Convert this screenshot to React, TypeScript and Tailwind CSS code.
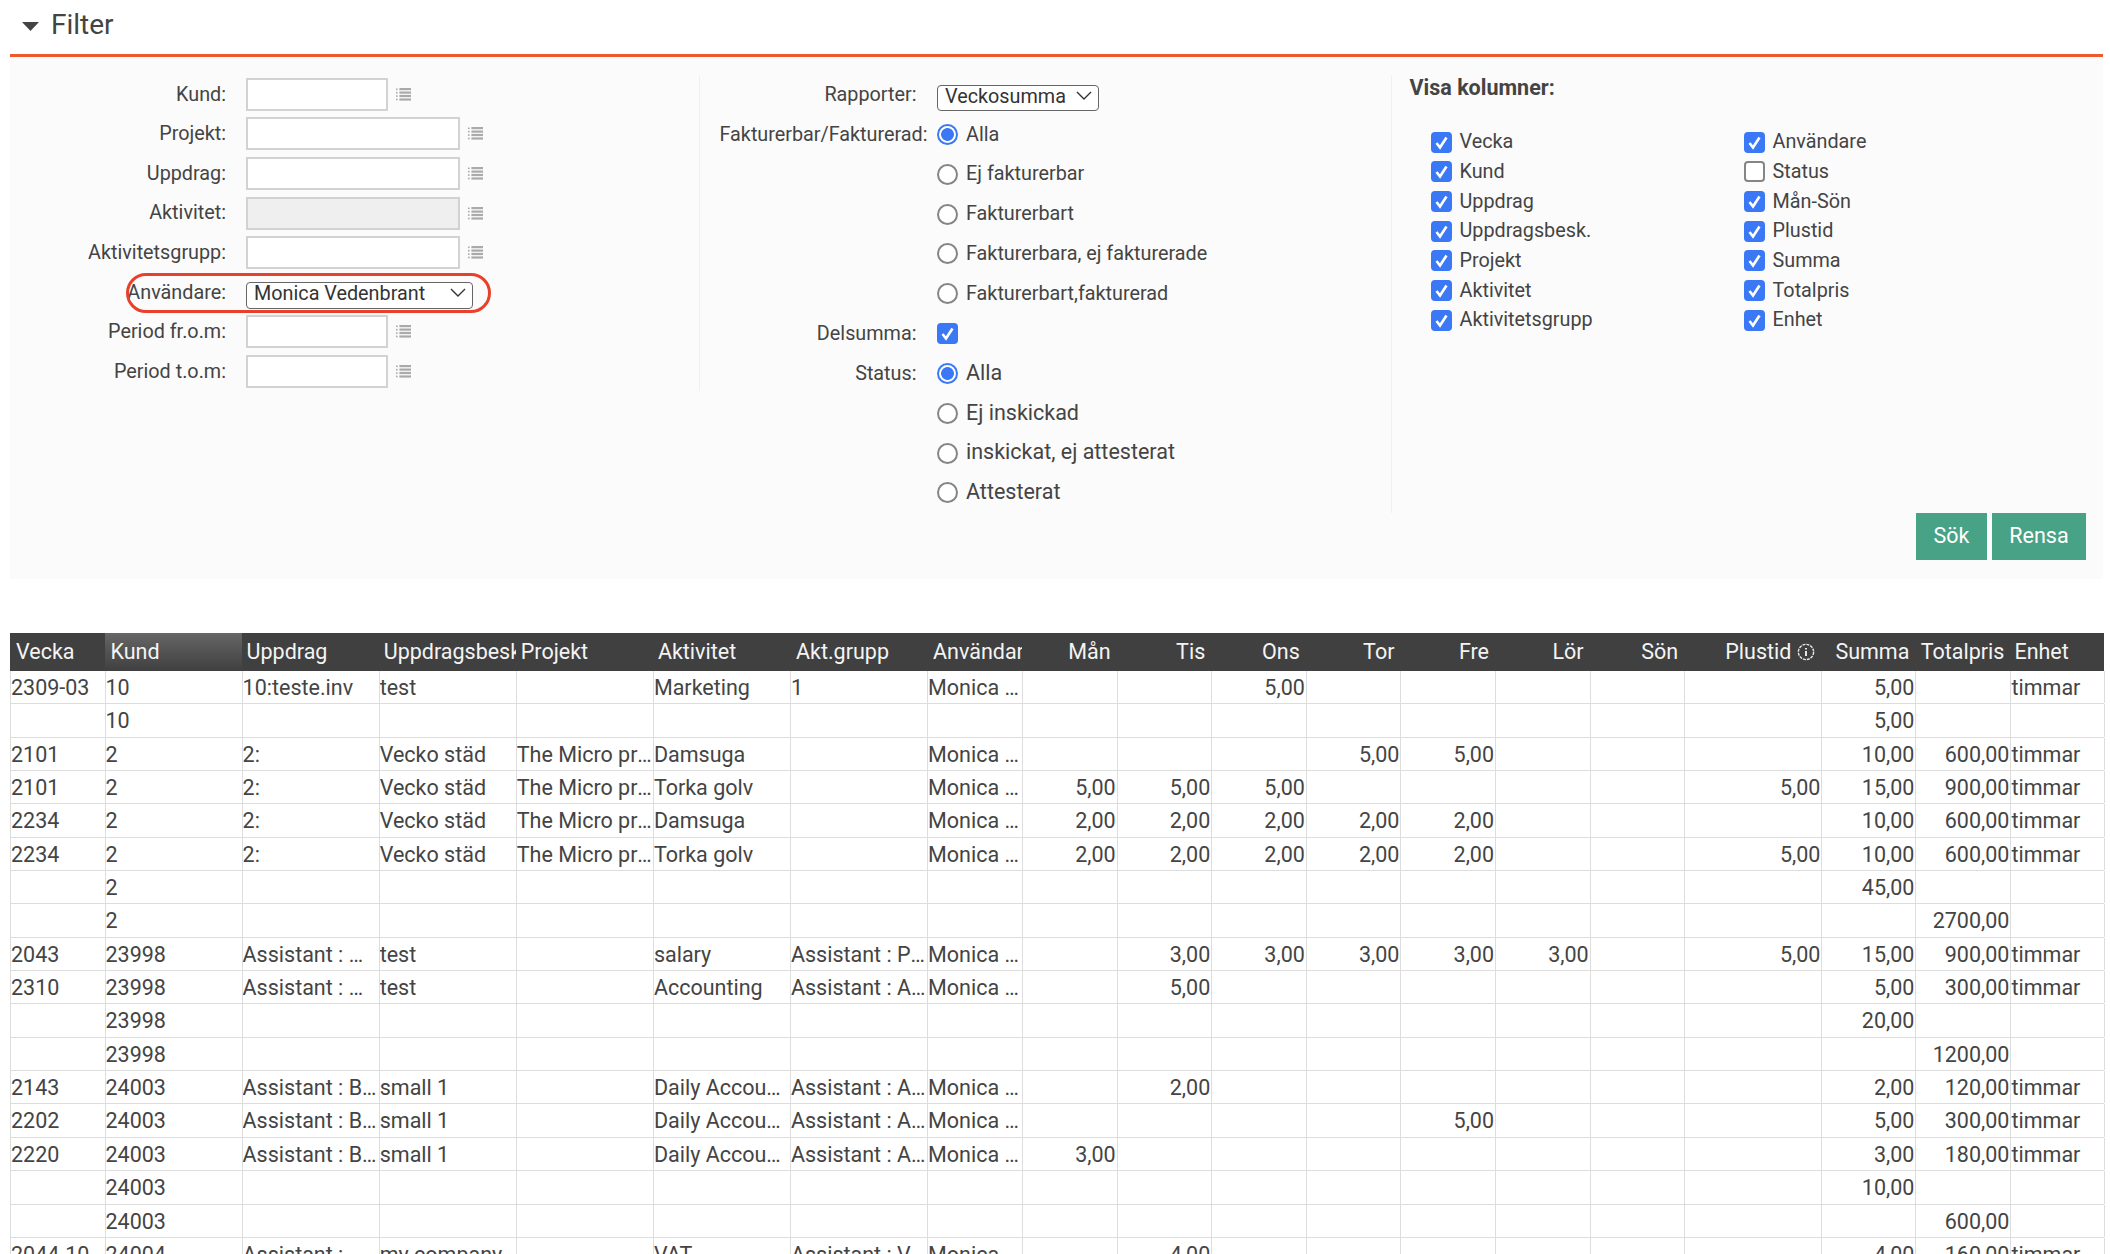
import { ReactNode } from 'react';

const ROW_GRID = 'grid grid-cols-[94.5px_137.1px_137.1px_137.1px_137.1px_137.1px_137.1px_95px_94.6px_94.6px_94.6px_94.6px_94.6px_94.6px_94.6px_137.2px_94px_95px_93.5px]';

type Row = {
  v?: string;
  k: string;
  u?: string;
  b?: string;
  p?: string;
  a?: string;
  g?: string;
  user?: boolean;
  days?: Partial<Record<0 | 1 | 2 | 3 | 4 | 5 | 6, string>>;
  plus?: string;
  sum?: string;
  total?: string;
  unit?: boolean;
};

const MICRO = 'The Micro project';
const USER = 'Monica Vedenbrant';

const rows: Row[] = [
  { v: '2309-03', k: '10', u: '10:teste.inv', b: 'test', a: 'Marketing', g: '1', user: true, days: { 2: '5,00' }, sum: '5,00', unit: true },
  { k: '10', sum: '5,00' },
  { v: '2101', k: '2', u: '2:', b: 'Vecko städ', p: MICRO, a: 'Damsuga', user: true, days: { 3: '5,00', 4: '5,00' }, sum: '10,00', total: '600,00', unit: true },
  { v: '2101', k: '2', u: '2:', b: 'Vecko städ', p: MICRO, a: 'Torka golv', user: true, days: { 0: '5,00', 1: '5,00', 2: '5,00' }, plus: '5,00', sum: '15,00', total: '900,00', unit: true },
  { v: '2234', k: '2', u: '2:', b: 'Vecko städ', p: MICRO, a: 'Damsuga', user: true, days: { 0: '2,00', 1: '2,00', 2: '2,00', 3: '2,00', 4: '2,00' }, sum: '10,00', total: '600,00', unit: true },
  { v: '2234', k: '2', u: '2:', b: 'Vecko städ', p: MICRO, a: 'Torka golv', user: true, days: { 0: '2,00', 1: '2,00', 2: '2,00', 3: '2,00', 4: '2,00' }, plus: '5,00', sum: '10,00', total: '600,00', unit: true },
  { k: '2', sum: '45,00' },
  { k: '2', total: '2700,00' },
  { v: '2043', k: '23998', u: 'Assistant : Marketing', b: 'test', a: 'salary', g: 'Assistant : Payroll', user: true, days: { 1: '3,00', 2: '3,00', 3: '3,00', 4: '3,00', 5: '3,00' }, plus: '5,00', sum: '15,00', total: '900,00', unit: true },
  { v: '2310', k: '23998', u: 'Assistant : Marketing', b: 'test', a: 'Accounting', g: 'Assistant : Accounting', user: true, days: { 1: '5,00' }, sum: '5,00', total: '300,00', unit: true },
  { k: '23998', sum: '20,00' },
  { k: '23998', total: '1200,00' },
  { v: '2143', k: '24003', u: 'Assistant : Bookkeeping', b: 'small 1', a: 'Daily Accounting', g: 'Assistant : Accounting', user: true, days: { 1: '2,00' }, sum: '2,00', total: '120,00', unit: true },
  { v: '2202', k: '24003', u: 'Assistant : Bookkeeping', b: 'small 1', a: 'Daily Accounting', g: 'Assistant : Accounting', user: true, days: { 4: '5,00' }, sum: '5,00', total: '300,00', unit: true },
  { v: '2220', k: '24003', u: 'Assistant : Bookkeeping', b: 'small 1', a: 'Daily Accounting', g: 'Assistant : Accounting', user: true, days: { 0: '3,00' }, sum: '3,00', total: '180,00', unit: true },
  { k: '24003', sum: '10,00' },
  { k: '24003', total: '600,00' },
  { v: '2044-10', k: '24004', u: 'Assistant : Marketing', b: 'my company', a: 'VAT', g: 'Assistant : VAT', user: true, days: { 1: '4,00' }, sum: '4,00', total: '160,00', unit: true },
];

function ListIcon() {
  return (
    <svg width="15" height="13" viewBox="0 0 15 13" className="shrink-0 text-[#aaaaaa]" fill="currentColor">
      <rect x="0" y="0.5" width="1.6" height="1.6" />
      <rect x="0" y="3.9" width="1.6" height="1.6" />
      <rect x="0" y="7.3" width="1.6" height="1.6" />
      <rect x="0" y="10.7" width="1.6" height="1.6" />
      <rect x="3.4" y="0" width="11.6" height="2.2" />
      <rect x="3.4" y="3.5" width="11.6" height="2.2" />
      <rect x="3.4" y="6.9" width="11.6" height="2.2" />
      <rect x="3.4" y="10.4" width="11.6" height="2.2" />
    </svg>
  );
}

function Select({ value, className }: { value: string; className: string }) {
  return (
    <span className={`relative inline-block ${className}`}>
      <select
        defaultValue={value}
        className="h-full w-full appearance-none rounded-[4px] border border-[#666666] bg-white pb-[3px] pl-[7px] leading-none text-[#333333]"
      >
        <option>{value}</option>
      </select>
      <svg width="16" height="9" viewBox="0 0 16 9" fill="none" stroke="#333333" strokeWidth="1.4" className="pointer-events-none absolute right-[7px] top-[9px]">
        <path d="M1 1l7 7 7-7" />
      </svg>
    </span>
  );
}

function FieldRow({ label, children }: { label: string; children: ReactNode }) {
  return (
    <div className="flex h-[39.6px] items-center">
      <label className="w-[236px] shrink-0 whitespace-nowrap pr-[20px] text-right">{label}</label>
      {children}
    </div>
  );
}

function Field({ label, wide, disabled }: { label: string; wide?: boolean; disabled?: boolean }) {
  return (
    <FieldRow label={label}>
      <input
        disabled={disabled}
        className={`h-[33px] border-2 border-[#d2d2d2] ${disabled ? 'bg-[#efefef]' : 'bg-white'} ${wide ? 'w-[214px]' : 'w-[142px]'}`}
      />
      <span className="ml-[8px]">
        <ListIcon />
      </span>
    </FieldRow>
  );
}

function MidRow({ label, wideLabel, children }: { label?: string; wideLabel?: boolean; children: ReactNode }) {
  return (
    <div className="flex h-[39.85px] items-center">
      <span className={`w-[237px] shrink-0 whitespace-nowrap text-right ${wideLabel ? 'pr-[9.5px]' : 'pr-[20.5px]'}`}>{label}</span>
      {children}
    </div>
  );
}

function Radio({ name, label, checked, rowLabel, wideLabel, large }: { name: string; label: string; checked?: boolean; rowLabel?: string; wideLabel?: boolean; large?: boolean }) {
  return (
    <MidRow label={rowLabel} wideLabel={wideLabel}>
      <label className="flex items-center">
        <input
          type="radio"
          name={name}
          defaultChecked={checked}
          className="m-0 h-[21px] w-[21px] shrink-0 appearance-none rounded-full border-2 border-[#858585] bg-white checked:border-[#3b78f6] checked:bg-[radial-gradient(circle,#3b78f6_0,#3b78f6_6px,#ffffff_6.8px)]"
        />
        <span className={`ml-[8px] ${large ? 'pb-[1px] text-[21.5px]' : ''}`}>{label}</span>
      </label>
    </MidRow>
  );
}

function CheckBox({ checked = true }: { checked?: boolean }) {
  return (
    <span className="relative h-[21px] w-[21px] shrink-0">
      <input
        type="checkbox"
        defaultChecked={checked}
        className="peer m-0 block h-[21px] w-[21px] appearance-none rounded-[4px] border-2 border-[#858585] bg-white checked:border-[#3b78f6] checked:bg-[#3b78f6]"
      />
      <svg width="21" height="21" viewBox="0 0 21 21" fill="none" stroke="#ffffff" strokeWidth="2.6" className="pointer-events-none absolute left-0 top-0 hidden peer-checked:block">
        <path d="M5.5 11l3.5 4.5 6.5-10" />
      </svg>
    </span>
  );
}

function Check({ label, checked = true }: { label: string; checked?: boolean }) {
  return (
    <label className="flex h-[29.7px] items-center">
      <CheckBox checked={checked} />
      <span className="ml-[8px]">{label}</span>
    </label>
  );
}

function Head({ children, right, pad = 'pl-[5px]', className = '' }: { children: ReactNode; right?: boolean; pad?: string; className?: string }) {
  return (
    <div className={`flex h-[38px] items-center overflow-hidden whitespace-nowrap ${right ? 'justify-end pr-[6px]' : pad} ${className}`}>
      {children}
    </div>
  );
}

function Cell({ children, right }: { children?: ReactNode; right?: boolean }) {
  return (
    <div className={`truncate border-r border-[#dddddd] leading-[33px] ${right ? 'pr-[1px] text-right' : ''}`}>
      {children}
    </div>
  );
}

export default function App() {
  return (
    <div className="h-[1254px] w-[2110px] overflow-hidden bg-white font-['Roboto',sans-serif] text-[19.8px] text-[#444444]">
      {/* Filter heading */}
      <div className="ml-[10px] mr-[7px] flex h-[57px] items-start border-b-[3px] border-[#ee5a2b] pl-[12px] pt-[7px]">
        <svg width="17" height="9" viewBox="0 0 17 9" className="mt-[15px]" fill="#444444">
          <path d="M0 0h17L8.5 9z" />
        </svg>
        <span className="ml-[12px] text-[28px] leading-[36px]">Filter</span>
      </div>

      {/* Filter panel */}
      <div className="ml-[10px] mr-[7px] flex h-[522px] items-start bg-[#fbfbfb] pt-[17.6px]">
        <div className="w-[690px] border-r border-[#f0f0f0]">
          <Field label="Kund:" />
          <Field label="Projekt:" wide />
          <Field label="Uppdrag:" wide />
          <Field label="Aktivitet:" wide disabled />
          <Field label="Aktivitetsgrupp:" wide />
          <div className="relative">
            <FieldRow label="Användare:">
              <Select value={USER} className="h-[27px] w-[227px]" />
            </FieldRow>
            <div className="pointer-events-none absolute left-[116px] top-0 h-[40px] w-[365px] rounded-full border-[3px] border-[#e8402a]" />
          </div>
          <Field label="Period fr.o.m:" />
          <Field label="Period t.o.m:" />
        </div>

        <div className="w-[691.5px] border-r border-[#f0f0f0]">
          <MidRow label="Rapporter:">
            <Select value="Veckosumma" className="h-[26px] w-[161.5px]" />
          </MidRow>
          <Radio name="faktura" label="Alla" checked rowLabel="Fakturerbar/Fakturerad:" wideLabel />
          <Radio name="faktura" label="Ej fakturerbar" />
          <Radio name="faktura" label="Fakturerbart" />
          <Radio name="faktura" label="Fakturerbara, ej fakturerade" />
          <Radio name="faktura" label="Fakturerbart,fakturerad" />
          <MidRow label="Delsumma:">
            <CheckBox />
          </MidRow>
          <Radio name="status" label="Alla" checked rowLabel="Status:" large />
          <Radio name="status" label="Ej inskickad" large />
          <Radio name="status" label="inskickat, ej attesterat" large />
          <Radio name="status" label="Attesterat" large />
        </div>

        <div className="flex h-[503px] flex-1 flex-col pl-[18px] pr-[17px]">
          <div className="h-[52.6px] text-[21.5px] font-bold leading-[26px]">Visa kolumner:</div>
          <div className="grid grid-cols-[313px_1fr] pl-[21px]">
            <div>
              {['Vecka', 'Kund', 'Uppdrag', 'Uppdragsbesk.', 'Projekt', 'Aktivitet', 'Aktivitetsgrupp'].map((c) => (
                <Check key={c} label={c} />
              ))}
            </div>
            <div>
              <Check label="Användare" />
              <Check label="Status" checked={false} />
              {['Mån-Sön', 'Plustid', 'Summa', 'Totalpris', 'Enhet'].map((c) => (
                <Check key={c} label={c} />
              ))}
            </div>
          </div>
          <div className="mt-auto flex justify-end gap-[5px] pb-[18px] text-[21.5px] text-white">
            <button className="h-[47px] w-[71px] bg-[#48a285]">Sök</button>
            <button className="h-[47px] w-[94px] bg-[#48a285]">Rensa</button>
          </div>
        </div>
      </div>

      <div className="h-[54px]" />

      {/* Report table */}
      <div className="ml-[10px] w-[2094px] text-[21.5px]">
        <div className={`${ROW_GRID} bg-[#404040] text-[#f4f4f4]`}>
          <Head pad="pl-[6px]">Vecka</Head>
          <Head pad="pl-[6px]" className="bg-gradient-to-b from-[#666666] to-[#404040]">Kund</Head>
          <Head>Uppdrag</Head>
          <Head>Uppdragsbeskrivning</Head>
          <Head>Projekt</Head>
          <Head>Aktivitet</Head>
          <Head pad="pl-[6px]">Akt.grupp</Head>
          <Head pad="pl-[6px]">Användare</Head>
          {['Mån', 'Tis', 'Ons', 'Tor', 'Fre', 'Lör', 'Sön'].map((d) => (
            <Head key={d} right>{d}</Head>
          ))}
          <Head right>
            Plustid
            <svg width="18" height="18" viewBox="0 0 18 18" className="ml-[6px] shrink-0" fill="none" stroke="#e6e6e6">
              <circle cx="9" cy="9" r="7.6" strokeWidth="1.4" strokeDasharray="3 1" />
              <path d="M9 8v5M9 5v1.6" strokeWidth="2" />
            </svg>
          </Head>
          <Head right>Summa</Head>
          <Head right>Totalpris</Head>
          <Head pad="pl-[4px]">Enhet</Head>
        </div>
        <div className="border-l border-[#dddddd]">
          {rows.map((r, i) => (
            <div key={i} className={`${ROW_GRID} h-[33.35px] border-b border-[#dddddd]`}>
              <Cell>{r.v}</Cell>
              <Cell>{r.k}</Cell>
              <Cell>{r.u}</Cell>
              <Cell>{r.b}</Cell>
              <Cell>{r.p}</Cell>
              <Cell>{r.a}</Cell>
              <Cell>{r.g}</Cell>
              <Cell>{r.user ? USER : ''}</Cell>
              {[0, 1, 2, 3, 4, 5, 6].map((d) => (
                <Cell key={d} right>{r.days?.[d as 0]}</Cell>
              ))}
              <Cell right>{r.plus}</Cell>
              <Cell right>{r.sum}</Cell>
              <Cell right>{r.total}</Cell>
              <Cell>{r.unit ? 'timmar' : ''}</Cell>
            </div>
          ))}
        </div>
      </div>
    </div>
  );
}
